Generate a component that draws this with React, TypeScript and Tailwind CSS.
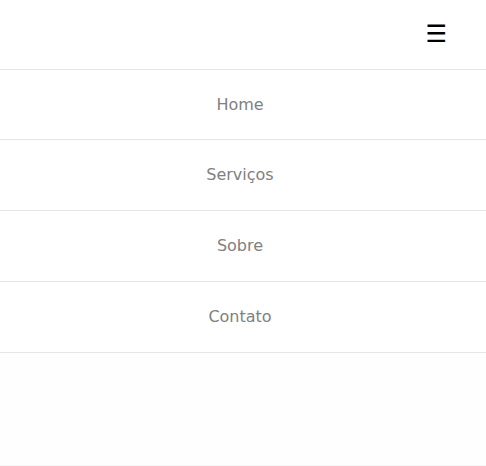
import React from 'react';

const links = ['Home', 'Serviços', 'Sobre', 'Contato'];

export default function App() {
  return (
    <div className="w-[486px] h-[466px] overflow-hidden bg-[#fefefe] flex flex-col" style={{ fontFamily: '"DejaVu Sans", sans-serif' }}>
      <header className="h-[70px] shrink-0 bg-white border-b border-[#e6e6e6] flex items-center justify-end pr-[39px] pb-[2px]">
        <button className="text-[24px] leading-none text-black" aria-label="Menu">☰</button>
      </header>
      <nav className="bg-white">
        <ul>
          {links.map((label, i) => (
            <li
              key={label}
              className={`${i === 0 ? 'h-[70px]' : 'h-[71px]'} border-b border-[#e6e6e6] flex items-center justify-center pr-[6px]`}
            >
              <a href="#" className="text-[16px] text-[#808080]">{label}</a>
            </li>
          ))}
        </ul>
      </nav>
      <div className="flex-1" />
      <div className="h-px bg-[#f6f6f6]" />
    </div>
  );
}
